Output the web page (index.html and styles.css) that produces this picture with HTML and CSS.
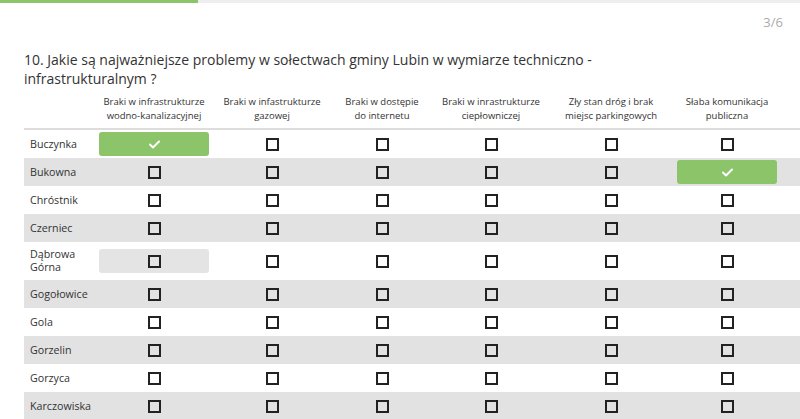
FILE: index.html
```html
<!DOCTYPE html>
<html lang="pl">
<head>
<meta charset="utf-8">
<title>Ankieta</title>
<link rel="stylesheet" href="styles.css">
</head>
<body>
<div class="progress"><div class="progress-fill"></div></div>
<div class="page">
  <div class="counter">3/6</div>
  <h1 class="question">10. Jakie są najważniejsze problemy w sołectwach gminy Lubin w wymiarze techniczno - infrastrukturalnym ?</h1>
  <div class="matrix">
    <div class="row head">
      <div class="label"></div>
      <div class="col-title">Braki w infrastrukturze<br>wodno-kanalizacyjnej</div>
      <div class="col-title">Braki w infastrukturze<br>gazowej</div>
      <div class="col-title">Braki w dostępie<br>do internetu</div>
      <div class="col-title">Braki w inrastrukturze<br>ciepłowniczej</div>
      <div class="col-title">Zły stan dróg i brak<br>miejsc parkingowych</div>
      <div class="col-title">Słaba komunikacja<br>publiczna</div>
    </div>
    <div class="row">
      <div class="label">Buczynka</div>
      <div class="cell"><div class="opt checked"><svg class="tick" viewBox="0 0 11 9" width="11" height="9"><polyline points="1,4.5 4,7.5 10,1.5"/></svg></div></div>
      <div class="cell"><div class="opt"><span class="box"></span></div></div>
      <div class="cell"><div class="opt"><span class="box"></span></div></div>
      <div class="cell"><div class="opt"><span class="box"></span></div></div>
      <div class="cell"><div class="opt"><span class="box"></span></div></div>
      <div class="cell"><div class="opt"><span class="box"></span></div></div>
    </div>
    <div class="row alt">
      <div class="label">Bukowna</div>
      <div class="cell"><div class="opt"><span class="box"></span></div></div>
      <div class="cell"><div class="opt"><span class="box"></span></div></div>
      <div class="cell"><div class="opt"><span class="box"></span></div></div>
      <div class="cell"><div class="opt"><span class="box"></span></div></div>
      <div class="cell"><div class="opt"><span class="box"></span></div></div>
      <div class="cell"><div class="opt checked"><svg class="tick" viewBox="0 0 11 9" width="11" height="9"><polyline points="1,4.5 4,7.5 10,1.5"/></svg></div></div>
    </div>
    <div class="row">
      <div class="label">Chróstnik</div>
      <div class="cell"><div class="opt"><span class="box"></span></div></div>
      <div class="cell"><div class="opt"><span class="box"></span></div></div>
      <div class="cell"><div class="opt"><span class="box"></span></div></div>
      <div class="cell"><div class="opt"><span class="box"></span></div></div>
      <div class="cell"><div class="opt"><span class="box"></span></div></div>
      <div class="cell"><div class="opt"><span class="box"></span></div></div>
    </div>
    <div class="row alt">
      <div class="label">Czerniec</div>
      <div class="cell"><div class="opt"><span class="box"></span></div></div>
      <div class="cell"><div class="opt"><span class="box"></span></div></div>
      <div class="cell"><div class="opt"><span class="box"></span></div></div>
      <div class="cell"><div class="opt"><span class="box"></span></div></div>
      <div class="cell"><div class="opt"><span class="box"></span></div></div>
      <div class="cell"><div class="opt"><span class="box"></span></div></div>
    </div>
    <div class="row tall">
      <div class="label">Dąbrowa<br>Górna</div>
      <div class="cell"><div class="opt hover"><span class="box"></span></div></div>
      <div class="cell"><div class="opt"><span class="box"></span></div></div>
      <div class="cell"><div class="opt"><span class="box"></span></div></div>
      <div class="cell"><div class="opt"><span class="box"></span></div></div>
      <div class="cell"><div class="opt"><span class="box"></span></div></div>
      <div class="cell"><div class="opt"><span class="box"></span></div></div>
    </div>
    <div class="row alt">
      <div class="label">Gogołowice</div>
      <div class="cell"><div class="opt"><span class="box"></span></div></div>
      <div class="cell"><div class="opt"><span class="box"></span></div></div>
      <div class="cell"><div class="opt"><span class="box"></span></div></div>
      <div class="cell"><div class="opt"><span class="box"></span></div></div>
      <div class="cell"><div class="opt"><span class="box"></span></div></div>
      <div class="cell"><div class="opt"><span class="box"></span></div></div>
    </div>
    <div class="row">
      <div class="label">Gola</div>
      <div class="cell"><div class="opt"><span class="box"></span></div></div>
      <div class="cell"><div class="opt"><span class="box"></span></div></div>
      <div class="cell"><div class="opt"><span class="box"></span></div></div>
      <div class="cell"><div class="opt"><span class="box"></span></div></div>
      <div class="cell"><div class="opt"><span class="box"></span></div></div>
      <div class="cell"><div class="opt"><span class="box"></span></div></div>
    </div>
    <div class="row alt">
      <div class="label">Gorzelin</div>
      <div class="cell"><div class="opt"><span class="box"></span></div></div>
      <div class="cell"><div class="opt"><span class="box"></span></div></div>
      <div class="cell"><div class="opt"><span class="box"></span></div></div>
      <div class="cell"><div class="opt"><span class="box"></span></div></div>
      <div class="cell"><div class="opt"><span class="box"></span></div></div>
      <div class="cell"><div class="opt"><span class="box"></span></div></div>
    </div>
    <div class="row">
      <div class="label">Gorzyca</div>
      <div class="cell"><div class="opt"><span class="box"></span></div></div>
      <div class="cell"><div class="opt"><span class="box"></span></div></div>
      <div class="cell"><div class="opt"><span class="box"></span></div></div>
      <div class="cell"><div class="opt"><span class="box"></span></div></div>
      <div class="cell"><div class="opt"><span class="box"></span></div></div>
      <div class="cell"><div class="opt"><span class="box"></span></div></div>
    </div>
    <div class="row alt">
      <div class="label">Karczowiska</div>
      <div class="cell"><div class="opt"><span class="box"></span></div></div>
      <div class="cell"><div class="opt"><span class="box"></span></div></div>
      <div class="cell"><div class="opt"><span class="box"></span></div></div>
      <div class="cell"><div class="opt"><span class="box"></span></div></div>
      <div class="cell"><div class="opt"><span class="box"></span></div></div>
      <div class="cell"><div class="opt"><span class="box"></span></div></div>
    </div>
  </div>
</div>
</body>
</html>
```
FILE: styles.css
```css
* { box-sizing: border-box; }
html, body { margin: 0; padding: 0; background: #fff; }
body {
  width: 800px;
  height: 419px;
  overflow: hidden;
  font-family: "Open Sans", "Noto Sans", sans-serif;
  color: #333;
}
.progress {
  height: 3px;
  background: #eeeeee;
}
.progress-fill {
  width: 198px;
  height: 3px;
  background: #8cc46a;
}
.page {
  padding-left: 24px;
}
.counter {
  text-align: right;
  padding: 11px 17px 0 0;
  font-size: 13px;
  line-height: 16px;
  color: #aaa;
}
.question {
  margin: 20px 0 0;
  font-size: 14px;
  font-weight: 400;
  line-height: 19px;
  color: #333;
  padding-right: 150px;
}
.matrix {
  margin-top: 7px;
}
.row {
  display: grid;
  grid-template-columns: 71px 118px 118px 102px 116px 124px 108px 1fr;
  align-items: center;
  min-height: 28px;
}
.row.alt { background: #e2e2e2; }
.row.tall { min-height: 38px; }
.row.head {
  border-bottom: 2px solid #ddd;
  padding-bottom: 5px;
  align-items: end;
}
.col-title {
  text-align: center;
  font-size: 9.5px;
  line-height: 14px;
  color: #333;
}
.label {
  padding: 0 6px;
  font-size: 10.7px;
  line-height: 13px;
  color: #333;
}
.cell {
  padding: 0 4px;
}
.opt {
  height: 24px;
  border-radius: 3px;
  display: flex;
  align-items: center;
  justify-content: center;
}
.opt.checked { background: #8cc46a; }
.opt.hover { background: #e4e4e4; }
.box {
  width: 13px;
  height: 13px;
  border: 2px solid #222;
}
.tick polyline {
  fill: none;
  stroke: #fff;
  stroke-width: 2;
  stroke-linecap: round;
  stroke-linejoin: round;
}
```
